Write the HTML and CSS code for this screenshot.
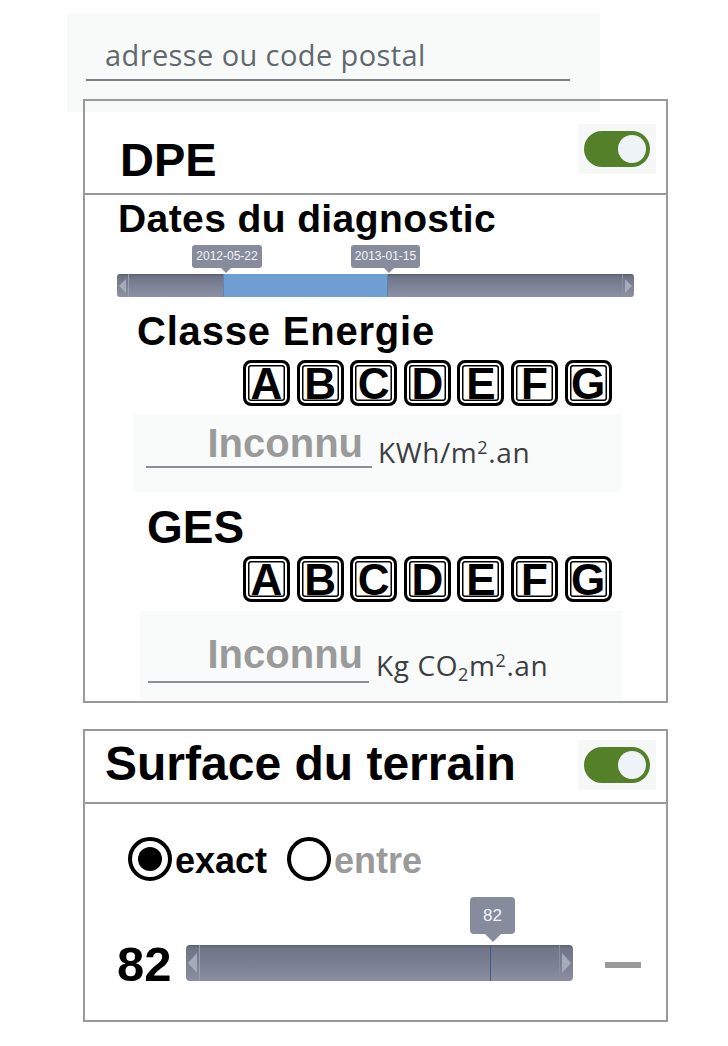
FILE: index.html
```html
<!DOCTYPE html>
<html lang="fr">
<head>
<meta charset="utf-8">
<title>Filtres</title>
<link rel="stylesheet" href="styles.css">
</head>
<body>
<div class="page">
  <div class="search">
    <div class="search-field">adresse ou code postal</div>
  </div>

  <section class="panel panel-dpe">
    <header class="panel-head">
      <h2 class="title-dpe">DPE</h2>
      <div class="toggle-wrap"><span class="toggle"><span class="knob"></span></span></div>
    </header>
    <div class="panel-body">
      <h3 class="dates-title">Dates du diagnostic</h3>
      <div class="range range-dates">
        <div class="tip tip-a">2012-05-22</div>
        <div class="tip tip-b">2013-01-15</div>
        <div class="track track-dates">
          <span class="handle handle-left"></span>
          <span class="selection"></span>
          <span class="handle handle-right"></span>
        </div>
      </div>

      <h3 class="classe-title">Classe Energie</h3>
      <div class="letters letters-energie">
        <span class="letter">A</span><span class="letter">B</span><span class="letter">C</span><span class="letter">D</span><span class="letter">E</span><span class="letter">F</span><span class="letter">G</span>
      </div>
      <div class="value-box value-energie">
        <div class="value-field">Inconnu</div>
        <div class="unit">KWh/m<sup>2</sup>.an</div>
      </div>

      <h3 class="ges-title">GES</h3>
      <div class="letters letters-ges">
        <span class="letter">A</span><span class="letter">B</span><span class="letter">C</span><span class="letter">D</span><span class="letter">E</span><span class="letter">F</span><span class="letter">G</span>
      </div>
      <div class="value-box value-ges">
        <div class="value-field">Inconnu</div>
        <div class="unit">Kg CO<sub>2</sub>m<sup>2</sup>.an</div>
      </div>
    </div>
  </section>

  <section class="panel panel-surface">
    <header class="panel-head head-surface">
      <h2 class="title-surface">Surface du terrain</h2>
      <div class="toggle-wrap"><span class="toggle"><span class="knob"></span></span></div>
    </header>
    <div class="panel-body body-surface">
      <div class="radios">
        <span class="radio radio-on"></span><span class="radio-label">exact</span>
        <span class="radio radio-off"></span><span class="radio-label label-off">entre</span>
      </div>
      <div class="surface-row">
        <span class="surface-value">82</span>
        <div class="track track-surface">
          <div class="tip tip-big">82</div>
          <span class="handle handle-left big"></span>
          <span class="marker"></span>
          <span class="handle handle-right big"></span>
        </div>
        <span class="dash"></span>
      </div>
    </div>
  </section>
</div>
</body>
</html>
```

FILE: styles.css
```css
* { box-sizing: border-box; }

html, body {
  margin: 0;
  padding: 0;
  background: #ffffff;
}

body {
  font-family: "Liberation Sans", Arial, sans-serif;
  color: #000;
  width: 728px;
}

.page {
  padding-top: 13px;
}

/* search */
.search {
  margin-left: 67px;
  width: 533px;
  height: 99px;
  background: #f8f9f9;
  margin-bottom: -13px;
}

.search-field {
  margin-left: 19px;
  width: 484px;
  height: 68px;
  border-bottom: 2px solid #7c8084;
  padding: 26px 0 0 19px;
  font-family: "Open Sans", sans-serif;
  font-size: 29px;
  line-height: 32px;
  letter-spacing: 0.4px;
  color: #62696e;
}

/* panels */
.panel {
  margin-left: 83px;
  width: 585px;
  border: 2px solid #999;
}

.panel-surface {
  margin-top: 26px;
}

.panel-head {
  display: flex;
  justify-content: space-between;
  align-items: flex-start;
  height: 94px;
  border-bottom: 2px solid #999;
  padding: 0 10px 0 35px;
}

.head-surface {
  height: 73px;
  padding-left: 20px;
}

.panel-head h2 {
  margin: 36px 0 0;
  font-size: 47px;
  line-height: 46px;
  font-weight: bold;
}

.head-surface h2 {
  margin-top: 9px;
  font-size: 48px;
  line-height: 48px;
}

.toggle-wrap {
  margin-top: 23px;
  width: 78px;
  height: 50px;
  background: #f6f7f7;
  padding: 7px 6px;
}

.head-surface .toggle-wrap {
  margin-top: 9px;
}

.toggle {
  display: flex;
  justify-content: flex-end;
  align-items: center;
  width: 66px;
  height: 36px;
  border-radius: 18px;
  background: #548029;
  padding: 0 4px;
}

.knob {
  width: 28px;
  height: 28px;
  border-radius: 50%;
  background: #eef3f7;
}

/* DPE body */
.panel-body {
  display: flex;
  flex-direction: column;
  align-items: flex-start;
}

.dates-title,
.classe-title,
.ges-title {
  margin: 0;
  font-weight: bold;
  font-size: 39px;
  line-height: 38px;
  letter-spacing: 0.4px;
}

.dates-title {
  margin-top: 5px;
  margin-left: 33px;
}

.range {
  position: relative;
  margin-left: 32px;
  margin-top: 7px;
  padding-top: 29px;
}

.track {
  position: relative;
  display: flex;
  justify-content: space-between;
  border-radius: 3px;
  background: linear-gradient(#585d6e 0, #6f7487 3px, #7e8396 55%, #8c90a2 100%);
}

.track-dates {
  width: 517px;
  height: 23px;
}

.handle {
  position: relative;
  width: 12px;
  height: 100%;
}

.handle-left {
  border-right: 1px solid #9ca0ae;
}

.handle-right {
  border-left: 1px solid #8a8e9e;
}

.handle::after {
  content: "";
  position: absolute;
  top: 50%;
  width: 0;
  height: 0;
  border-top: 7px solid transparent;
  border-bottom: 7px solid transparent;
  transform: translateY(-50%);
}

.handle-left::after {
  left: 2px;
  border-right: 7px solid #a7abb9;
}

.handle-right::after {
  right: 2px;
  border-left: 7px solid #a7abb9;
}

.handle.big {
  width: 14px;
}

.handle.big::after {
  border-top-width: 10px;
  border-bottom-width: 10px;
}

.handle-left.big::after {
  border-right-width: 9px;
}

.handle-right.big::after {
  border-left-width: 9px;
}

.selection {
  position: absolute;
  left: 106px;
  top: 0;
  width: 165px;
  height: 100%;
  background: #6f9ed4;
  border-left: 1px solid #5b86bc;
  border-right: 1px solid #5b86bc;
}

.tip {
  position: absolute;
  top: 0;
  height: 23px;
  padding: 0;
  border-radius: 3px;
  background: #878c9d;
  color: #f4f5f8;
  font-size: 12px;
  line-height: 23px;
  text-align: center;
}

.tip::after {
  content: "";
  position: absolute;
  left: 50%;
  bottom: -5px;
  margin-left: -5px;
  border-left: 5px solid transparent;
  border-right: 5px solid transparent;
  border-top: 5px solid #878c9d;
}

.tip-a {
  left: 75px;
  width: 70px;
}

.tip-b {
  left: 234px;
  width: 69px;
}

.tip-a::after { margin-left: -6px; }
.tip-b::after { margin-left: -2px; }

.classe-title {
  margin-top: 15px;
  margin-left: 52px;
  font-size: 40px;
  letter-spacing: 0.8px;
}

.letters {
  display: flex;
  gap: 6.6px;
  margin-left: 158px;
}

.letters-energie {
  margin-top: 10px;
}

.letters-ges {
  margin-top: 6px;
}

.letter {
  width: 47px;
  height: 46px;
  border: 3px solid #000;
  border-radius: 8px;
  background: #fff;
  box-shadow: inset 0 0 0 2px #fff, inset 0 0 0 3.5px #000;
  font-weight: bold;
  font-size: 44px;
  line-height: 42px;
  text-align: center;
}

.value-box {
  display: flex;
  align-items: flex-start;
  background: #f9fafa;
}

.value-energie {
  margin-top: 8px;
  margin-left: 48px;
  width: 489px;
  height: 78px;
  padding-left: 13px;
}

.value-ges {
  margin-top: 9px;
  margin-left: 55px;
  width: 482px;
  height: 88px;
  padding-left: 8px;
  margin-bottom: 2px;
}

.value-field {
  width: 226px;
  height: 54px;
  padding: 10px 9px 0 0;
  border-bottom: 2px solid #8b9096;
  text-align: right;
  font-weight: bold;
  font-size: 40px;
  line-height: 38px;
  color: #9a9a9a;
}

.value-ges .value-field {
  width: 221px;
  height: 72px;
  padding-top: 24px;
  padding-right: 6px;
}

.unit {
  margin-left: 6px;
  margin-top: 22px;
  font-family: "Open Sans", sans-serif;
  font-size: 28px;
  line-height: 32px;
  letter-spacing: 0.6px;
  color: #3c3f42;
}

.value-ges .unit {
  margin-top: 38px;
  margin-left: 7px;
}

.unit sup,
.unit sub {
  font-size: 18px;
  line-height: 0;
}

.unit sup { vertical-align: 9px; }
.unit sub { vertical-align: -5px; }

.ges-title {
  margin-top: 12px;
  margin-left: 62px;
  font-size: 46px;
  line-height: 46px;
  letter-spacing: 0;
}

/* surface body */
.body-surface {
  padding-bottom: 38px;
}

.radios {
  display: flex;
  align-items: center;
  margin-top: 32px;
  margin-left: 43px;
  height: 46px;
}

.radio {
  position: relative;
  width: 44px;
  height: 44px;
  border: 4px solid #000;
  border-radius: 50%;
  background: #fff;
}

.radio-on::after {
  content: "";
  position: absolute;
  left: 6px;
  top: 6px;
  width: 24px;
  height: 24px;
  border-radius: 50%;
  background: #000;
}

.radio-off {
  margin-left: 20px;
}

.radio-label {
  margin-left: 3px;
  font-weight: bold;
  font-size: 36px;
  line-height: 40px;
  margin-top: 4px;
}

.label-off {
  color: #9a9a9a;
  margin-left: 3px;
}

.surface-row {
  display: flex;
  align-items: flex-start;
  margin-top: 63px;
  margin-left: 32px;
}

.surface-value {
  width: 55px;
  font-weight: bold;
  font-size: 49px;
  line-height: 36px;
  margin-top: 1px;
}

.track-surface {
  margin-left: 14px;
  width: 387px;
  height: 36px;
  border-radius: 4px;
  background: linear-gradient(#5b6072 0, #6f7487 3px, #7b8093 55%, #8b8fa1 100%);
}

.marker {
  position: absolute;
  left: 304px;
  top: 0;
  width: 1px;
  height: 100%;
  background: #3e5c86;
}

.tip-big {
  top: -48px;
  left: 284px;
  width: 45px;
  height: 37px;
  border-radius: 4px;
  font-size: 17px;
  line-height: 37px;
}

.tip-big::after {
  bottom: -8px;
  margin-left: -8px;
  border-left-width: 8px;
  border-right-width: 8px;
  border-top-width: 8px;
}

.dash {
  margin-left: 32px;
  margin-top: 17px;
  width: 36px;
  height: 6px;
  background: #9a9a9a;
}
```
